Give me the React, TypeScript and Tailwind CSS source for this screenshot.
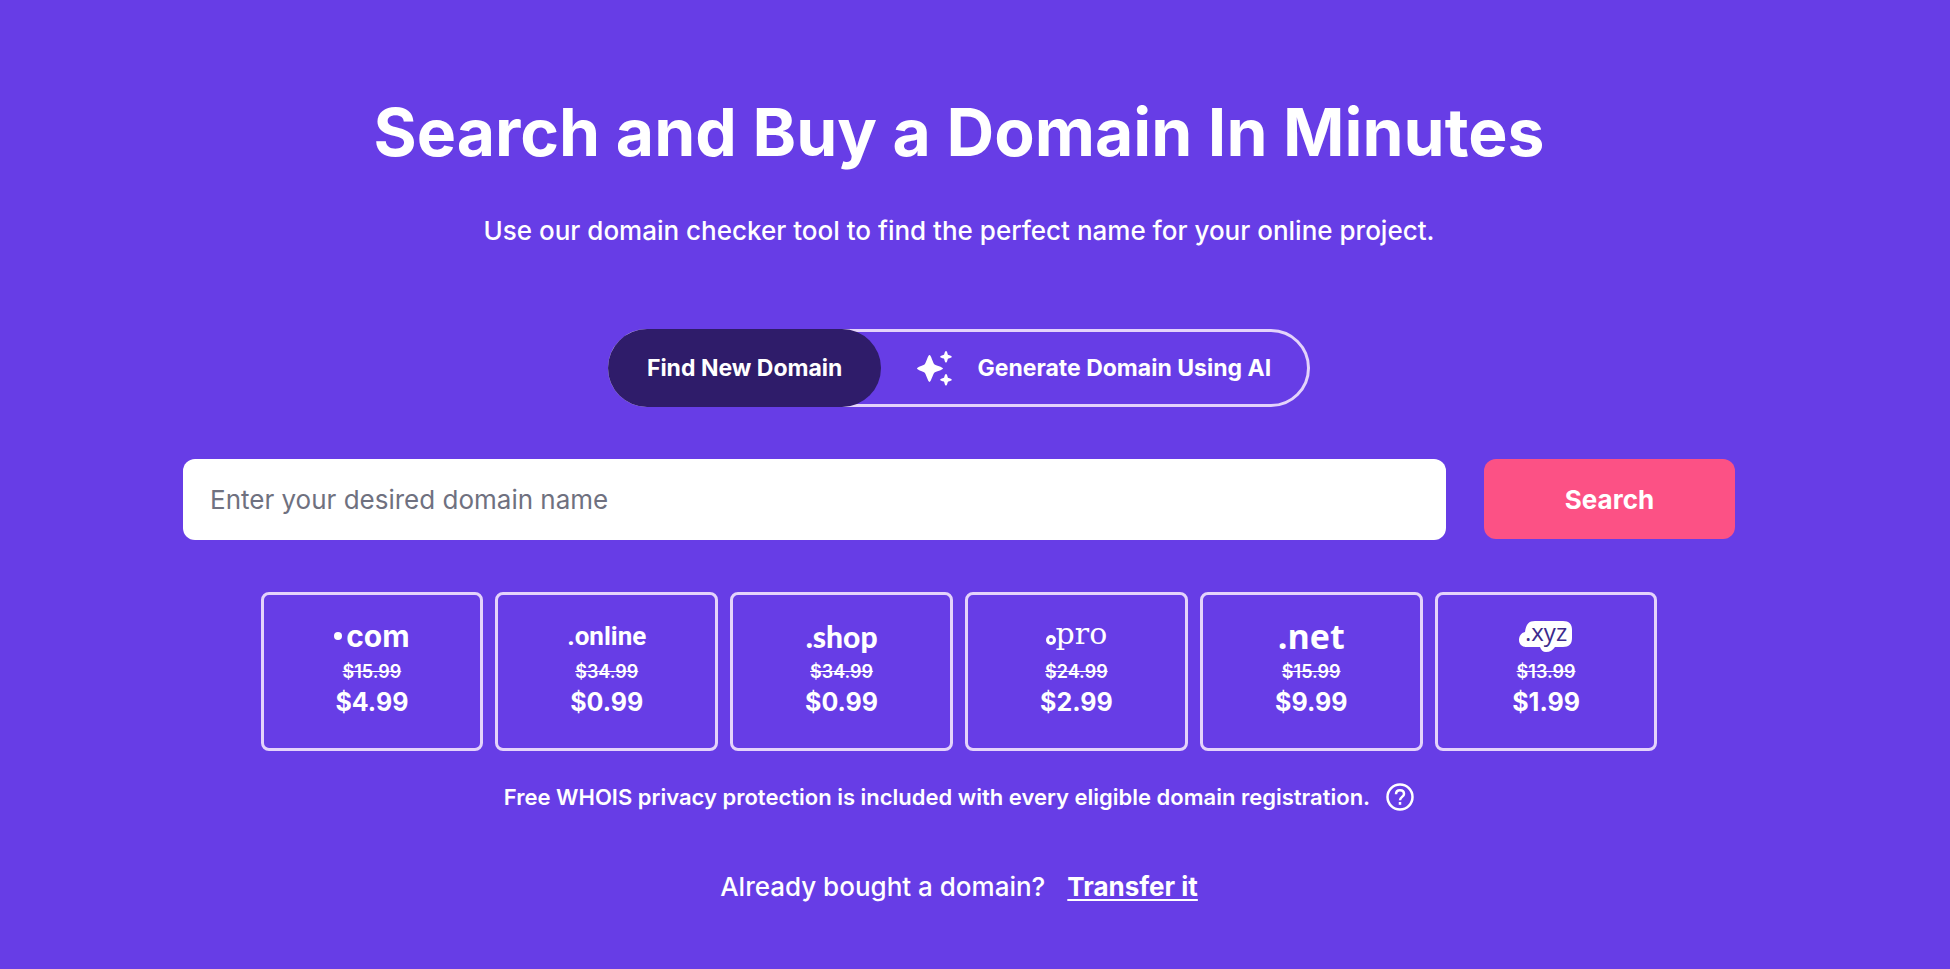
import { useState, type ReactNode } from 'react'

type Tld = {
  name: string
  logo: ReactNode
  oldPrice: string
  price: string
}

function XyzLogo() {
  return (
    <span className="relative flex h-8 w-14 justify-center">
      <svg viewBox="0 0 56 32" className="absolute inset-0 h-full w-full" aria-hidden="true">
        <path
          d="M17 1H45c6 0 9 3 9 9v8c0 6-3 9-9 9H37c-2 3-5 5-9 5-3 0-5-2-6-5H8c-4 0-7-3-7-7 0-4 2-7 6-8C8 4 11 1 17 1z"
          fill="#fff"
        />
      </svg>
      <span className="relative font-['Open_Sans',sans-serif] text-[24px] leading-6 text-[#3c2a8c]">.xyz</span>
    </span>
  )
}

const tlds: Tld[] = [
  {
    name: 'com',
    logo: (
      <span className="flex items-center gap-1 font-['Inter',sans-serif] text-[30px] font-bold leading-8">
        <span className="h-2 w-2 rounded-full bg-white" />
        com
      </span>
    ),
    oldPrice: '$15.99',
    price: '$4.99',
  },
  {
    name: 'online',
    logo: <span className="font-['Roboto',sans-serif] text-[26px] font-bold leading-8">.online</span>,
    oldPrice: '$34.99',
    price: '$0.99',
  },
  {
    name: 'shop',
    logo: <span className="font-['Lato',sans-serif] text-[30px] font-black leading-8">.shop</span>,
    oldPrice: '$34.99',
    price: '$0.99',
  },
  {
    name: 'pro',
    logo: (
      <span className="flex items-center font-['DejaVu_Serif',serif] text-[30px] leading-7">
        <span className="mt-3 h-[10px] w-[10px] rounded-full border-[3px] border-white" />
        pro
      </span>
    ),
    oldPrice: '$24.99',
    price: '$2.99',
  },
  {
    name: 'net',
    logo: <span className="font-['Open_Sans',sans-serif] text-[34px] font-bold leading-8">.net</span>,
    oldPrice: '$15.99',
    price: '$9.99',
  },
  { name: 'xyz', logo: <XyzLogo />, oldPrice: '$13.99', price: '$1.99' },
]

function SparkleIcon() {
  return (
    <svg viewBox="0 0 36 36" className="h-9 w-9" fill="currentColor" aria-hidden="true">
      <path d="M12.500 5c1.500 0 3.500 8 4.800 9.200 1.200 1.300 8.700 2.800 8.700 4.300s-7.500 3-8.700 4.300C16 24 14 32 12.500 32S9 24 7.700 22.800C6.500 21.500 0 20 0 18.500s6.500-3 7.700-4.300C9 13 11 5 12.500 5z" />
      <path d="M29 1c1.300 0 1.500 3.200 2 3.700s3.800.8 3.800 2.100-3.300 1.500-3.800 2-.7 3.800-2 3.800-1.500-3.300-2-3.800-3.800-.7-3.800-2 3.300-1.600 3.800-2.100S27.700 1 29 1z" />
      <path d="M29 24c1.300 0 1.500 3.200 2 3.700s3.800.8 3.800 2.100-3.300 1.500-3.800 2-.7 3.800-2 3.800-1.500-3.300-2-3.800-3.800-.7-3.800-2 3.300-1.600 3.800-2.100.7-3.700 2-3.700z" />
    </svg>
  )
}

function HelpIcon() {
  return (
    <svg viewBox="0 0 28 28" className="h-7 w-7" fill="none" stroke="currentColor" strokeWidth="2.5" aria-hidden="true">
      <circle cx="14" cy="14" r="12.500" />
      <path d="M10 11.200c0-2.400 1.700-4 4-4s4 1.500 4 3.700c0 2.800-4 3.200-4 6.300" />
      <path d="M14 19v2.800" />
    </svg>
  )
}

export default function App() {
  const [mode, setMode] = useState<'find' | 'ai'>('find')
  const [query, setQuery] = useState('')

  return (
    <main className="flex min-h-screen flex-col items-center bg-[#673de6] pl-4 pr-12 pt-[92px] pb-12 font-['Inter',sans-serif] text-white">
      <h1 className="text-center text-[66px] font-bold leading-20">Search and Buy a Domain In Minutes</h1>
      <p className="mt-[41px] text-center text-[26px] font-medium leading-9">
        Use our domain checker tool to find the perfect name for your online project.
      </p>

      <div className="mt-20 flex h-[78px] rounded-full border-[3px] border-[#e4d3fb] text-[23px] font-bold">
        <button
          onClick={() => setMode('find')}
          aria-pressed={mode === 'find'}
          className="-my-[3px] -ml-[3px] rounded-full bg-[#2f1c6a] px-[39px]"
        >
          Find New Domain
        </button>
        <button
          onClick={() => setMode('ai')}
          aria-pressed={mode === 'ai'}
          className="flex items-center gap-6 rounded-full px-9"
        >
          <SparkleIcon />
          Generate Domain Using AI
        </button>
      </div>

      <form
        onSubmit={(e) => e.preventDefault()}
        className="mt-[52px] flex w-full max-w-[1552px] gap-[38px] text-[26px]"
      >
        <input
          type="text"
          aria-label="Domain name"
          value={query}
          onChange={(e) => setQuery(e.target.value)}
          placeholder="Enter your desired domain name"
          className="h-[81px] min-w-0 flex-1 rounded-xl bg-white px-[27px] text-[#36344d] placeholder:text-[#6f7180]"
        />
        <button type="submit" className="h-20 w-[251px] rounded-xl bg-[#fc5185] font-bold">
          Search
        </button>
      </form>

      <ul className="mt-[52px] grid w-full max-w-[1397px] grid-cols-6 gap-3">
        {tlds.map((t) => (
          <li
            key={t.name}
            className="flex h-[159px] flex-col items-center rounded-lg border-[3px] border-[#e4d3fb] pt-[25px]"
          >
            <div className="flex h-8 items-start">{t.logo}</div>
            <s className="mt-2 text-[18px] font-semibold leading-6">{t.oldPrice}</s>
            <strong className="text-[25px] font-bold leading-9">{t.price}</strong>
          </li>
        ))}
      </ul>

      <div className="mt-7 flex items-center gap-4">
        <p className="text-[22px] font-semibold leading-9">
          Free WHOIS privacy protection is included with every eligible domain registration.
        </p>
        <button aria-label="About WHOIS privacy">
          <HelpIcon />
        </button>
      </div>

      <p className="mt-[54px] flex gap-[22px] text-[26px] font-medium leading-9">
        Already bought a domain?
        <a href="#transfer" className="font-bold underline decoration-2 underline-offset-3">
          Transfer it
        </a>
      </p>
    </main>
  )
}
